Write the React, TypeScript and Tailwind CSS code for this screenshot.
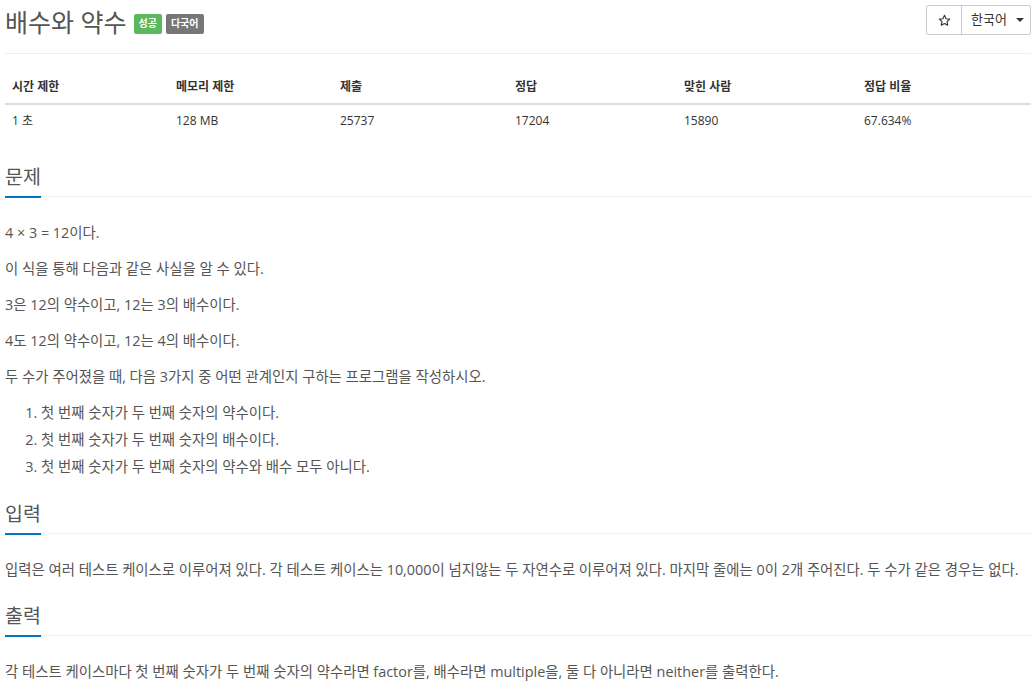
import React from 'react';

const font = "font-['Open_Sans','Noto_Sans_CJK_KR',sans-serif]";

const stats = [
  { label: '시간 제한', value: '1 초', w: 'w-[164px]' },
  { label: '메모리 제한', value: '128 MB', w: 'w-[164px]' },
  { label: '제출', value: '25737', w: 'w-[175px]' },
  { label: '정답', value: '17204', w: 'w-[169px]' },
  { label: '맞힌 사람', value: '15890', w: 'w-[180px]' },
  { label: '정답 비율', value: '67.634%', w: 'flex-1' },
];

const Headline = ({ title }: { title: string }) => (
  <div className="flex items-end">
    <span className="inline-block text-[19.5px] leading-[26px] text-[#555] pb-[6px] border-b-2 border-[#0076c0]">
      {title}
    </span>
    <div className="flex-1 border-b border-dotted border-[#dde3ea] mb-[1px]"></div>
  </div>
);

const App = () => {
  return (
    <div className={`min-h-screen bg-white px-[5px] text-[14.4px] text-[#555] ${font}`}>
      {/* Header */}
      <div className="flex justify-between items-start h-[54px] border-b border-[#eee]">
        <div className="flex items-center pt-[7px]">
          <h1 className="text-[25px] leading-[30px] text-[#555]">배수와 약수</h1>
          <span className="ml-[7px] mt-[3px] px-[5px] h-[20px] flex items-center bg-[#5cb85c] text-white text-[10px] font-bold rounded-[2px]">
            성공
          </span>
          <span className="ml-[4px] mt-[3px] px-[5px] h-[20px] flex items-center bg-[#777] text-white text-[10px] font-bold rounded-[2px]">
            다국어
          </span>
        </div>
        <div className="flex mt-[5px] h-[30px] border border-[#ccc] rounded-[2px] text-[13px] text-[#333]">
          <div className="w-[35px] flex items-center justify-center border-r border-[#ccc]">
            <svg width="13" height="13" viewBox="0 0 24 24" fill="none" stroke="#333" strokeWidth="2" strokeLinejoin="round">
              <path d="M12 2.5l2.9 6.2 6.7.8-5 4.6 1.4 6.7L12 17.4l-6 3.4 1.4-6.7-5-4.6 6.7-.8z" />
            </svg>
          </div>
          <div className="w-[68px] flex items-center pl-[9px] gap-[9px]">
            <span>한국어</span>
            <span className="w-0 h-0 border-l-[4px] border-r-[4px] border-t-[4px] border-l-transparent border-r-transparent border-t-[#333]"></span>
          </div>
        </div>
      </div>

      {/* Stats table */}
      <div className="mt-[15px] text-[12px] text-[#333]">
        <div className="flex border-b-2 border-[#ddd] font-bold">
          {stats.map((s) => (
            <div key={s.label} className={`${s.w} px-[7px] pt-[8px] pb-[6px] leading-[20px]`}>
              {s.label}
            </div>
          ))}
        </div>
        <div className="flex">
          {stats.map((s) => (
            <div key={s.label} className={`${s.w} px-[7px] py-[6px] leading-[20px]`}>
              {s.value}
            </div>
          ))}
        </div>
      </div>

      {/* 문제 */}
      <section className="mt-[27px]">
        <Headline title="문제" />
        <div className="mt-[25px] leading-[20px]">
          <p className="mb-[16px]">4 × 3 = 12이다.</p>
          <p className="mb-[16px]">이 식을 통해 다음과 같은 사실을 알 수 있다.</p>
          <p className="mb-[16px]">3은 12의 약수이고, 12는 3의 배수이다.</p>
          <p className="mb-[16px]">4도 12의 약수이고, 12는 4의 배수이다.</p>
          <p className="mb-[12px]">두 수가 주어졌을 때, 다음 3가지 중 어떤 관계인지 구하는 프로그램을 작성하시오.</p>
          <ol className="list-decimal list-outside pl-[36px] leading-[27px]">
            <li>첫 번째 숫자가 두 번째 숫자의 약수이다.</li>
            <li>첫 번째 숫자가 두 번째 숫자의 배수이다.</li>
            <li>첫 번째 숫자가 두 번째 숫자의 약수와 배수 모두 아니다.</li>
          </ol>
        </div>
      </section>

      {/* 입력 */}
      <section className="mt-[21px]">
        <Headline title="입력" />
        <p className="mt-[25px] leading-[20px]">
          입력은 여러 테스트 케이스로 이루어져 있다. 각 테스트 케이스는 10,000이 넘지않는 두 자연수로 이루어져 있다. 마지막 줄에는 0이 2개 주어진다. 두 수가 같은 경우는 없다.
        </p>
      </section>

      {/* 출력 */}
      <section className="mt-[23px]">
        <Headline title="출력" />
        <p className="mt-[25px] leading-[20px]">
          각 테스트 케이스마다 첫 번째 숫자가 두 번째 숫자의 약수라면 factor를, 배수라면 multiple을, 둘 다 아니라면 neither를 출력한다.
        </p>
      </section>
    </div>
  );
};

export default App;
